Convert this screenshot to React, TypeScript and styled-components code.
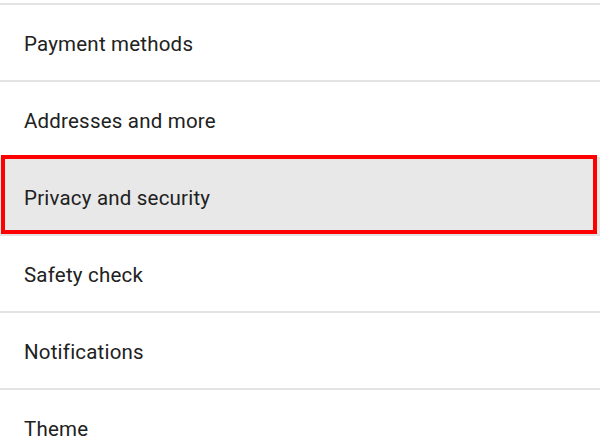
import React from "react";
import styled, { createGlobalStyle } from "styled-components";

const Global = createGlobalStyle`
  html, body { margin: 0; padding: 0; background: #ffffff; }
  body { font-family: Roboto, "Noto Sans", Arial, sans-serif; overflow: hidden; }
`;

const List = styled.div`
  width: 600px;
  height: 444px;
  overflow: hidden;
  padding-top: 3px;
  box-sizing: border-box;
  background: #ffffff;
`;

const Row = styled.div<{ $selected?: boolean }>`
  position: relative;
  height: 75px;
  box-sizing: content-box;
  border-top: 2px solid #e3e3e3;
  display: flex;
  align-items: center;
  padding-left: 24px;
  font-size: 20.5px;
  color: #212121;
  background: ${(p) => (p.$selected ? "#e8e8e8" : "#ffffff")};

  ${(p) =>
    p.$selected &&
    `
    &::after {
      content: "";
      position: absolute;
      top: -4px;
      left: 1px;
      right: 3px;
      bottom: 0;
      border: 4px solid #ff0000;
      pointer-events: none;
    }
  `}
`;

const Label = styled.span`
  line-height: 1;
  letter-spacing: 0.2px;
  padding-top: 4px;
`;

const items = [
  "Payment methods",
  "Addresses and more",
  "Privacy and security",
  "Safety check",
  "Notifications",
  "Theme",
];

export default function App() {
  return (
    <>
      <Global />
      <List>
        {items.map((t) => (
          <Row key={t} $selected={t === "Privacy and security"}>
            <Label>{t}</Label>
          </Row>
        ))}
      </List>
    </>
  );
}
